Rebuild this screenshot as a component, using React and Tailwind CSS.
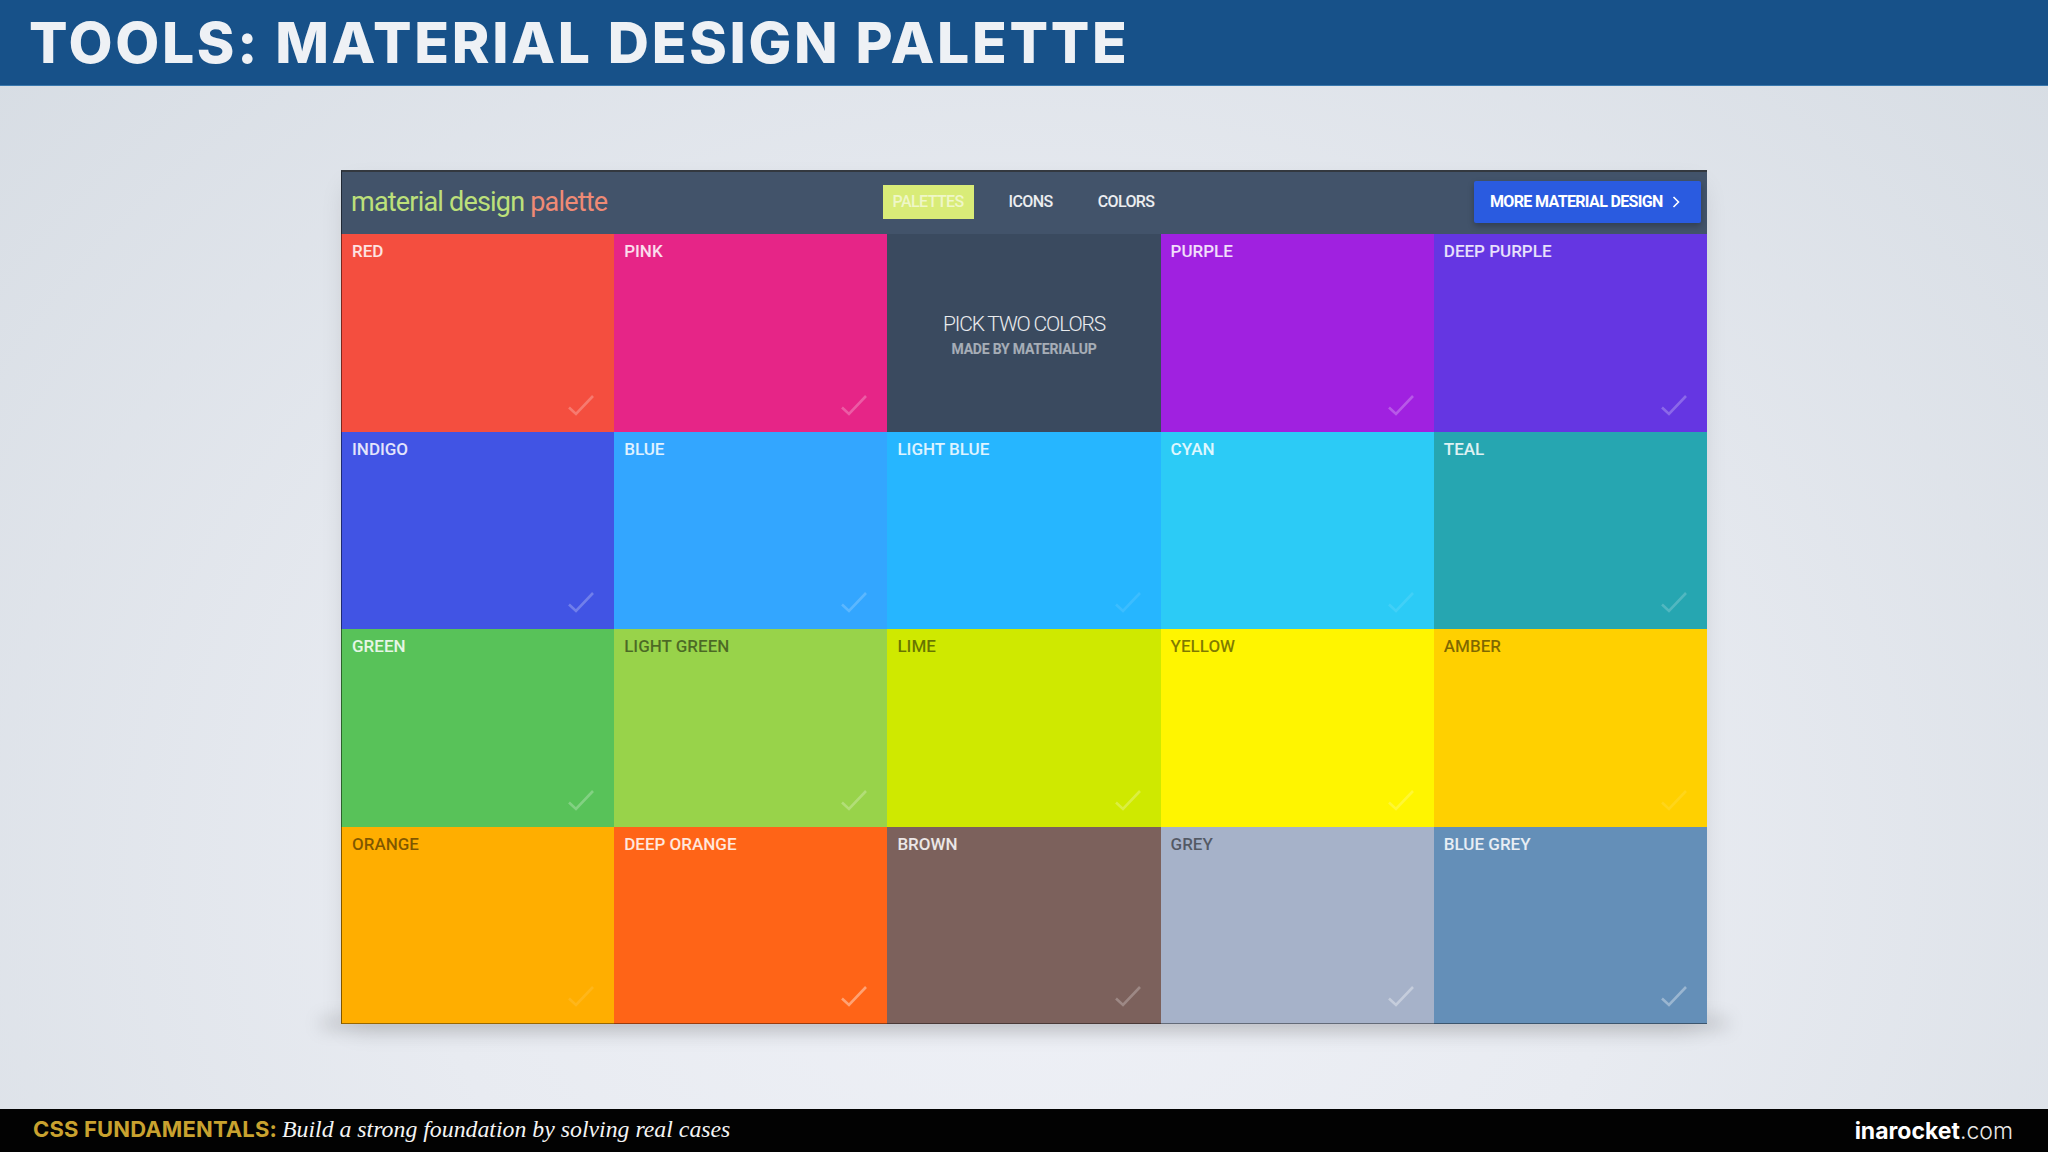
const rows = [
  { name: "RED", bg: "bg-[#f44e3f]", dark: false, chk: "text-white/25" },
  { name: "PINK", bg: "bg-[#e62587]", dark: false, chk: "text-white/25" },
  null,
  { name: "PURPLE", bg: "bg-[#a021e0]", dark: false, chk: "text-white/25" },
  { name: "DEEP PURPLE", bg: "bg-[#6536e2]", dark: false, chk: "text-white/25" },
  { name: "INDIGO", bg: "bg-[#4154e4]", dark: false, chk: "text-white/25" },
  { name: "BLUE", bg: "bg-[#33a6ff]", dark: false, chk: "text-white/20" },
  { name: "LIGHT BLUE", bg: "bg-[#26b6ff]", dark: false, chk: "text-white/10" },
  { name: "CYAN", bg: "bg-[#2ccbf6]", dark: false, chk: "text-white/10" },
  { name: "TEAL", bg: "bg-[#26a6b1]", dark: false, chk: "text-white/20" },
  { name: "GREEN", bg: "bg-[#58c259]", dark: false, chk: "text-white/25" },
  { name: "LIGHT GREEN", bg: "bg-[#98d34a]", dark: true, chk: "text-white/25" },
  { name: "LIME", bg: "bg-[#cfe900]", dark: true, chk: "text-white/25" },
  { name: "YELLOW", bg: "bg-[#fff500]", dark: true, chk: "text-white/20" },
  { name: "AMBER", bg: "bg-[#ffd000]", dark: true, chk: "text-white/10" },
  { name: "ORANGE", bg: "bg-[#ffae00]", dark: true, chk: "text-white/10" },
  { name: "DEEP ORANGE", bg: "bg-[#ff6417]", dark: false, chk: "text-white/40" },
  { name: "BROWN", bg: "bg-[#7c615c]", dark: false, chk: "text-white/25" },
  { name: "GREY", bg: "bg-[#a6b2c9]", dark: true, chk: "text-white/35" },
  { name: "BLUE GREY", bg: "bg-[#648fb8]", dark: false, chk: "text-white/35" },
];

function Check({ className }) {
  return (
    <svg width="26" height="21" viewBox="0 0 26 21" fill="none" className={className}>
      <path d="M1 12.5 L8 19 L25 1" stroke="currentColor" strokeWidth="2.6" />
    </svg>
  );
}

function Cell({ c, index }) {
  return (
    <div
      className={`${c.bg} ${index % 5 === 0 ? "border-l border-l-black/50" : ""} ${
        index >= 15 ? "border-b border-b-black/40" : ""
      } flex flex-col justify-between pl-[10px] pr-[20px] pt-[5px] pb-[16px]`}
    >
      <div
        className={`text-[17px] leading-[24px] font-medium tracking-[0px] ${
          c.dark ? "text-black/50" : "text-white/85"
        }`}
      >
        {c.name}
      </div>
      <div className="flex justify-end">
        <Check className={c.chk} />
      </div>
    </div>
  );
}

export default function App() {
  return (
    <div className="w-[2048px] h-[1152px] flex flex-col overflow-hidden font-['Roboto',sans-serif] bg-[#e6e9ef] bg-[radial-gradient(ellipse_at_50%_75%,#eff1f7_0%,#e8ebf1_42%,#d6dce3_100%)]">
      <header className="h-[86px] shrink-0 bg-[#175189] border-b border-b-[#3a78ad] flex items-center pl-[29px]">
        <h1 className="font-['Inter',sans-serif] font-extrabold text-[57px] leading-none text-[#eef1f5] tracking-[2.7px]">
          TOOLS: MATERIAL DESIGN PALETTE
        </h1>
      </header>

      <main className="flex-1 flex items-center justify-center pb-px">
        <div className="relative isolate w-[1366px] h-[854px] flex flex-col shadow-[0_10px_26px_-8px_rgba(0,0,0,0.16)]">
          <div className="absolute -z-10 -left-[20px] -right-[20px] -bottom-[3px] h-[7px] rounded-full bg-black/25 blur-[9px]" />
          <div className="h-[64px] shrink-0 bg-[#42536a] border-t-2 border-t-[#33383f] border-l border-l-black/50 grid grid-cols-[1fr_auto_1fr] items-center pl-[9px] pr-[6px] pb-[2px]">
            <div className="text-[27px] tracking-[-0.8px] text-[#bde07a]">
              material design <span className="text-[#ef8a75]">palette</span>
            </div>
            <nav className="flex items-center text-[16px] font-medium tracking-[-0.6px] text-white/90 -ml-[15px]">
              <span className="w-[91px] h-[34px] flex items-center justify-center bg-[#d9ec78] text-white/60">PALETTES</span>
              <span className="ml-[35px]">ICONS</span>
              <span className="ml-[45px]">COLORS</span>
            </nav>
            <div className="flex justify-end">
              <a className="w-[227px] h-[42px] flex items-center justify-between pl-[16px] pr-[21px] rounded-[2px] bg-[#2a5be0] shadow-[0_3px_6px_rgba(0,0,0,0.25)] text-white font-bold text-[16px] tracking-[-0.65px]">
                MORE MATERIAL DESIGN
                <svg width="8" height="12" viewBox="0 0 8 12" fill="none">
                  <path d="M1.5 1 L6.5 6 L1.5 11" stroke="white" strokeWidth="1.6" />
                </svg>
              </a>
            </div>
          </div>
          <div className="flex-1 grid grid-cols-5 grid-rows-4">
            {rows.map((c, i) =>
              c ? (
                <Cell key={c.name} c={c} index={i} />
              ) : (
                <div key={i} className="bg-[#3a4a5f] flex flex-col items-center justify-center pt-[4px]">
                  <div className="text-[21px] leading-[29px] font-light tracking-[-1.15px] text-white/90">PICK TWO COLORS</div>
                  <div className="text-[14px] leading-[20px] font-bold tracking-[-0.2px] text-white/55">MADE BY MATERIALUP</div>
                </div>
              )
            )}
          </div>
        </div>
      </main>

      <footer className="h-[43px] shrink-0 bg-[#020202] flex items-center justify-between pl-[33px] pr-[35px] pt-[2px]">
        <div className="flex items-baseline pb-[4px]">
          <span className="font-['Inter',sans-serif] font-bold text-[22px] tracking-[0.15px] text-[#c9a22f]">CSS FUNDAMENTALS:</span>
          <span className="ml-[5px] font-['Liberation_Serif',serif] italic text-[23.8px] text-[#f4f4f4]">
            Build a strong foundation by solving real cases
          </span>
        </div>
        <div className="font-['Inter',sans-serif] text-[23px] text-white">
          <span className="font-bold">inarocket</span>
          <span className="font-light text-[#e8e8e8]">.com</span>
        </div>
      </footer>
    </div>
  );
}
